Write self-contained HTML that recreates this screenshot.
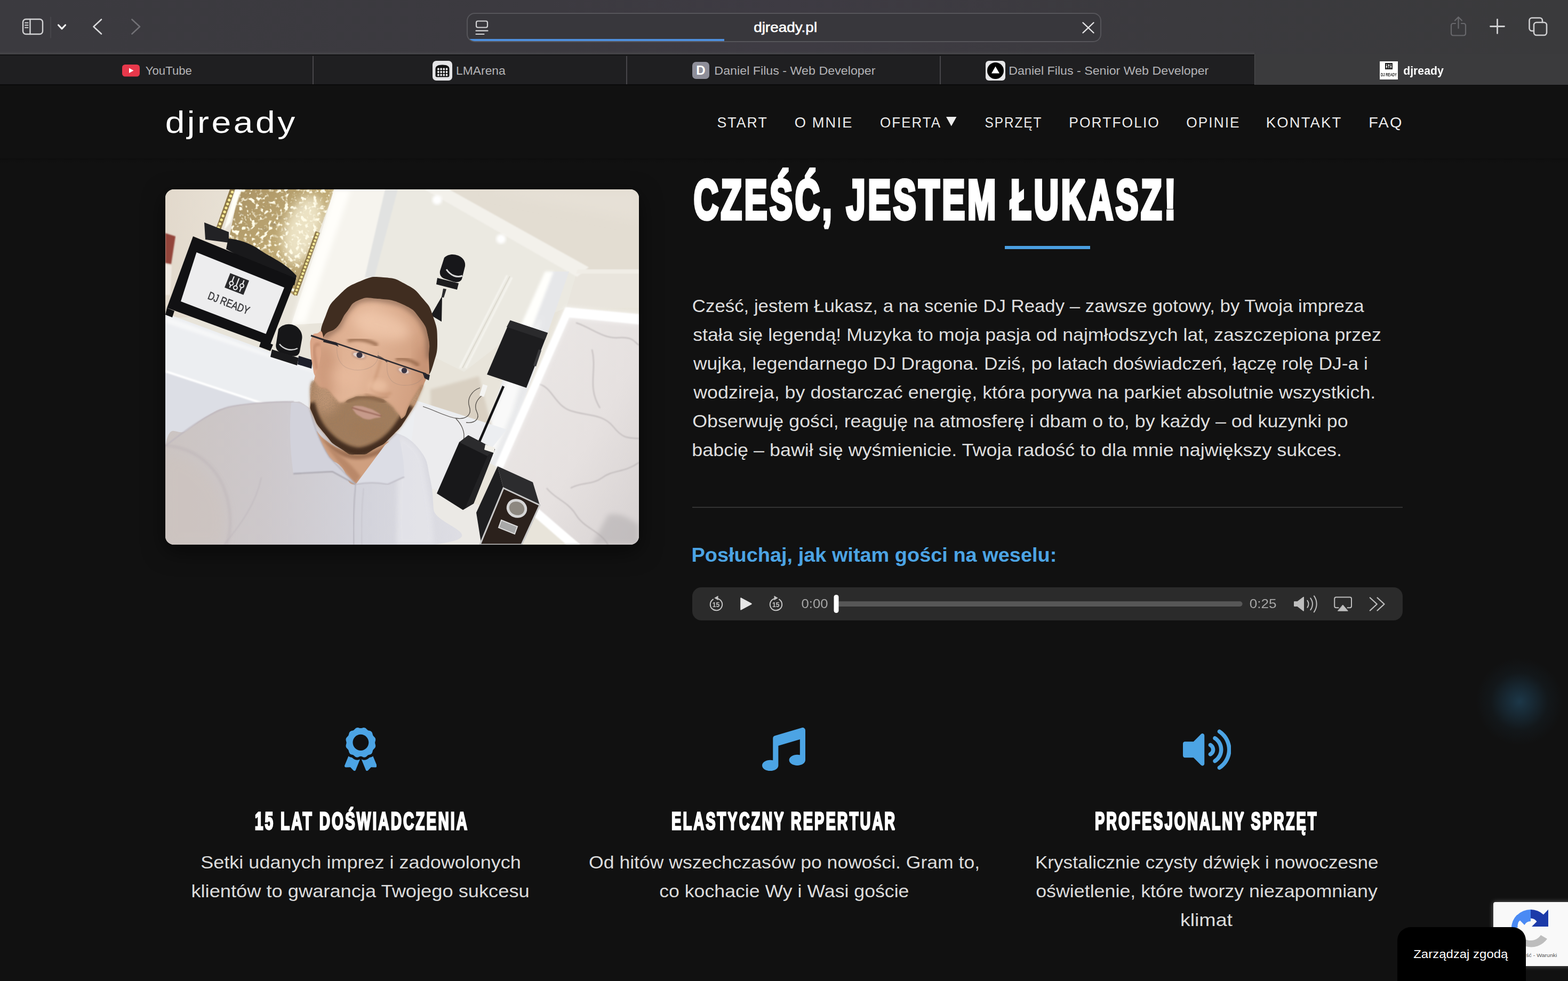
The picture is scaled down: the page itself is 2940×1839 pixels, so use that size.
<!DOCTYPE html>
<html lang="pl">
<head>
<meta charset="utf-8">
<title>djready</title>
<style>
*{box-sizing:border-box;margin:0;padding:0}
html,body{width:2940px;height:1839px;overflow:hidden;background:#111111}
body{position:relative;font-family:"Liberation Sans",sans-serif;color:#fff}
.abs{position:absolute}
.t{position:absolute;white-space:nowrap;line-height:1;transform-origin:0 0}
.tc{position:absolute;white-space:nowrap;line-height:1;transform-origin:50% 50%;text-align:center}
/* browser chrome */
#toolbar{left:0;top:0;width:2940px;height:103px;background:linear-gradient(90deg,#3b3a3f 0%,#3c3a40 35%,#3e3b43 50%,#3b3a3e 75%,#3a3a3c 100%)}
#tabbar{left:0;top:102px;width:2940px;height:58px;background:#1f1f21;border-top:2px solid #131314;border-bottom:2px solid #0a0a0a}
#tabhl{left:0;top:96px;width:2352px;height:6px;background:linear-gradient(rgba(72,72,75,0),rgba(72,72,75,.9))}
.tabdiv{top:105px;width:2px;height:53px;background:#47464a}
#acttab{left:2352px;top:102px;width:588px;height:56.500px;background:#3b3b3d;border-left:1.500px solid #4c4c4e}
.tabtxt{font-size:23.5px;color:#b3b3b6;top:120px}
#urlbar{left:875px;top:24px;width:1190px;height:55px;border:2px solid #56555a;border-radius:15px;background:#38373c;overflow:hidden}
#prog{left:0;bottom:-2px;width:481px;height:6px;background:#4e8fdd}
/* page */
#nav .t{font-size:28.5px;letter-spacing:3.2px;color:#ededed;top:215px}
.p{font-size:31px;color:#dfdfdf}
.fh{font-weight:bold;font-size:47px;color:#fff;letter-spacing:2px}
.ft{font-size:31px;color:#dcdcdc}
</style>
</head>
<body>

<!-- ===== Browser toolbar ===== -->
<div id="toolbar" class="abs"></div>
<div id="tabbar" class="abs"></div>
<div id="tabhl" class="abs"></div>
<div id="acttab" class="abs"></div>
<div class="abs tabdiv" style="left:586px"></div>
<div class="abs tabdiv" style="left:1174px"></div>
<div class="abs tabdiv" style="left:1762px"></div>

<!-- toolbar icons -->
<svg class="abs" style="left:0;top:0" width="2940" height="103" viewBox="0 0 2940 103" fill="none" stroke-linecap="round" stroke-linejoin="round">
  <!-- sidebar -->
  <rect x="43" y="36" width="37" height="28" rx="5.5" stroke="#d2d2d4" stroke-width="2.4"/>
  <line x1="56.5" y1="36" x2="56.5" y2="64" stroke="#d2d2d4" stroke-width="2.4"/>
  <path d="M47 42.7h5.5M47 47.2h5.5M47 51.7h5.5" stroke="#d2d2d4" stroke-width="2"/>
  <line x1="95" y1="32" x2="95" y2="71" stroke="#4b4a4f" stroke-width="1.5"/>
  <path d="M109.5 47l6.5 6.8 6.5-6.8" stroke="#f2f2f2" stroke-width="3.2"/>
  <path d="M190 36.5l-14.5 13.5 14.5 13.5" stroke="#dadadc" stroke-width="2.6"/>
  <path d="M247.5 36.5l14.5 13.5-14.5 13.5" stroke="#727176" stroke-width="2.6"/>
  <!-- share -->
  <path d="M2729 44h-4.5a3.5 3.5 0 0 0-3.500 3.500v15.500a3.500 3.500 0 0 0 3.500 3.500h20a3.500 3.500 0 0 0 3.500-3.500v-15.500a3.500 3.500 0 0 0-3.500-3.500h-4.500" stroke="#68686c" stroke-width="2.2"/>
  <path d="M2734.500 53v-21M2728 38.500l6.500-6.500 6.500 6.500" stroke="#68686c" stroke-width="2.2"/>
  <!-- plus -->
  <path d="M2794.500 49.500h26M2807.500 36.500v26" stroke="#cfcfd1" stroke-width="2.8"/>
  <!-- tabs -->
  <path d="M2876 58h-3.500a5 5 0 0 1-5-5v-14.500a5 5 0 0 1 5-5h14.500a5 5 0 0 1 5 5v3.500" stroke="#cfcfd1" stroke-width="2.6"/>
  <rect x="2876" y="42" width="24" height="24" rx="5" stroke="#cfcfd1" stroke-width="2.6"/>
</svg>

<!-- url bar -->
<div id="urlbar" class="abs"><div id="prog" class="abs"></div></div>
<svg class="abs" style="left:885px;top:30px" width="40" height="44" viewBox="885 30 40 44" fill="none" stroke="#d4d4d6" stroke-linecap="round">
  <rect x="893" y="39.500" width="21" height="12" rx="3" stroke-width="2.2"/>
  <path d="M892.500 57.700h22M892.500 64h15" stroke-width="2.2"/>
</svg>
<svg class="abs" style="left:2024px;top:36px" width="32" height="32" viewBox="2024 36 32 32" fill="none" stroke="#e4e4e6" stroke-width="2.4" stroke-linecap="round"><path d="M2030.500 42.500l20 19M2050.500 42.500l-20 19"/></svg>

<!-- tabs content -->
<svg class="abs" style="left:229px;top:121px" width="33" height="23" viewBox="0 0 33 23"><rect width="33" height="22.500" rx="5.500" fill="#e7384b"/><path d="M13 6.500l8.500 4.800-8.500 4.800z" fill="#fff"/></svg>

<svg class="abs" style="left:811px;top:114px" width="37" height="37" viewBox="0 0 37 37"><rect width="37" height="37" rx="7" fill="#e4e4e6"/><path d="M5.500 15Q5.500 7.500 18.500 7.500T31.500 15V27.500Q31.500 30.500 28.500 30.500H8.500Q5.500 30.500 5.500 27.500z" fill="#111"/><g fill="#ececee"><rect x="9.2" y="13.5" width="3.400" height="4" rx="1.200"/><rect x="14.4" y="13.5" width="3.400" height="4" rx="1.200"/><rect x="19.6" y="13.5" width="3.400" height="4" rx="1.200"/><rect x="24.8" y="13.5" width="3.400" height="4" rx="1.200"/><rect x="9.2" y="19" width="3.400" height="4" rx="1.200"/><rect x="14.4" y="19" width="3.400" height="4" rx="1.200"/><rect x="19.6" y="19" width="3.400" height="4" rx="1.200"/><rect x="24.8" y="19" width="3.400" height="4" rx="1.200"/><rect x="9.2" y="24.5" width="3.400" height="4" rx="1.200"/><rect x="14.4" y="24.5" width="3.400" height="4" rx="1.200"/><rect x="19.6" y="24.5" width="3.400" height="4" rx="1.200"/><rect x="24.8" y="24.5" width="3.400" height="4" rx="1.200"/></g></svg>

<div class="abs" style="left:1298px;top:116px;width:32px;height:32px;border-radius:7px;background:#8e8e99"></div>
<div class="tc" style="left:1298px;top:120px;width:32px;font-size:24px;font-weight:bold;color:#fff">D</div>

<svg class="abs" style="left:1848px;top:114px" width="37" height="37" viewBox="0 0 37 37"><rect width="37" height="37" rx="6" fill="#e6e6e8"/><circle cx="18.500" cy="18.500" r="15.500" fill="#000"/><path d="M18.500 10.500l7.500 13h-15z" fill="#fff"/></svg>

<svg class="abs" style="left:2587px;top:115px;will-change:transform" width="34" height="34" viewBox="0 0 34 34"><rect width="34" height="34" fill="#fff"/><rect x="10" y="3" width="14" height="12" fill="#222"/><path d="M13 5v8M17 5v8M21 5v8" stroke="#fff" stroke-width="1"/><circle cx="13" cy="10" r="1.300" fill="#fff"/><circle cx="17" cy="7.500" r="1.300" fill="#fff"/><circle cx="21" cy="10" r="1.300" fill="#fff"/><text x="17" y="27.500" font-family="Liberation Sans, sans-serif" font-size="8.500" font-weight="bold" fill="#222" text-anchor="middle" textLength="30" lengthAdjust="spacingAndGlyphs">DJ READY</text></svg>

<!-- ===== Page ===== -->
<div class="abs" id="hdrshadow" style="left:0;top:297px;width:2940px;height:8px;background:linear-gradient(#0e0e0e,#111111)"></div>


<div id="nav">
  <svg class="abs" style="left:1773.500px;top:219px" width="20" height="18" viewBox="0 0 20 18"><path d="M0 0h19.500l-9.750 17.500z" fill="#ededed"/></svg>
</div>

<!-- photo placeholder -->
<div class="abs" id="photo" style="left:310px;top:355px;width:888px;height:666px;border-radius:16px;overflow:hidden;background:#e6e1d6;box-shadow:0 12px 40px rgba(0,0,0,.55)">
<!--PHOTO-S-->
<svg class="abs" style="left:0;top:0;will-change:transform" width="888" height="666" viewBox="0 0 888 666">
<defs>
  <filter id="b1" x="-5%" y="-5%" width="110%" height="110%"><feGaussianBlur stdDeviation="1"/></filter>
  <filter id="b2" x="-10%" y="-10%" width="120%" height="120%"><feGaussianBlur stdDeviation="2.500"/></filter>
  <filter id="b4" x="-20%" y="-20%" width="140%" height="140%"><feGaussianBlur stdDeviation="5"/></filter>
  <filter id="b8" x="-30%" y="-30%" width="160%" height="160%"><feGaussianBlur stdDeviation="10"/></filter>
  <filter id="b16" x="-40%" y="-40%" width="180%" height="180%"><feGaussianBlur stdDeviation="18"/></filter>
  <filter id="spark" x="0" y="0" width="100%" height="100%">
    <feTurbulence type="fractalNoise" baseFrequency="0.13" numOctaves="2" seed="7" result="n"/>
    <feColorMatrix in="n" type="matrix" values="0 0 0 0 1  0 0 0 0 0.970  0 0 0 0 0.800  4 4 0 0 -4.150"/>
    <feGaussianBlur stdDeviation="0.600"/>
  </filter>
  <filter id="sparkd" x="0" y="0" width="100%" height="100%">
    <feTurbulence type="fractalNoise" baseFrequency="0.100" numOctaves="2" seed="21" result="n"/>
    <feColorMatrix in="n" type="matrix" values="0 0 0 0 0.400  0 0 0 0 0.310  0 0 0 0 0.160  -3.500 -3.500 0 0 2.900"/>
    <feGaussianBlur stdDeviation="0.800"/>
  </filter>
  <filter id="stub" x="0" y="0" width="100%" height="100%">
    <feTurbulence type="fractalNoise" baseFrequency="0.450" numOctaves="2" seed="3" result="n"/>
    <feColorMatrix in="n" type="matrix" values="0 0 0 0 0.300  0 0 0 0 0.200  0 0 0 0 0.130  2.500 2.500 0 0 -2.200"/>
    <feComposite in2="SourceGraphic" operator="in"/>
  </filter>
  <linearGradient id="gwall" x1="0" y1="0" x2="1" y2="0"><stop offset="0" stop-color="#e2d9cc"/><stop offset="1" stop-color="#e9e2d6"/></linearGradient>
  <linearGradient id="gshirt" x1="0" y1="0" x2="1" y2="0"><stop offset="0" stop-color="#cbc3bf"/><stop offset="0.400" stop-color="#cdc8cb"/><stop offset="0.700" stop-color="#d3d3db"/><stop offset="1" stop-color="#dedee4"/></linearGradient>
  <linearGradient id="gskin" x1="0" y1="0" x2="1" y2="0.300"><stop offset="0" stop-color="#d6a486"/><stop offset="0.500" stop-color="#e4b799"/><stop offset="1" stop-color="#d19f80"/></linearGradient>
  <linearGradient id="ggold" x1="0" y1="0" x2="1" y2="1"><stop offset="0" stop-color="#a89163"/><stop offset="0.500" stop-color="#bfa974"/><stop offset="1" stop-color="#b19a68"/></linearGradient>
  <linearGradient id="gmarble" x1="0" y1="0" x2="1" y2="1"><stop offset="0" stop-color="#ece9e7"/><stop offset="0.600" stop-color="#e6e1e0"/><stop offset="1" stop-color="#d6d1d1"/></linearGradient>
  <clipPath id="cgold"><path d="M138 0H318L243 200 118 100z"/></clipPath>

  <clipPath id="cbeard"><path d="M275.0 360.0C280.7 352.0 279.7 366.7 289.0 372.0C298.3 377.3 293.3 369.3 303.0 376.0C312.7 382.7 309.0 384.0 318.0 392.0C327.0 400.0 320.0 400.0 330.0 400.0C340.0 400.0 335.0 396.3 348.0 392.0C361.0 387.7 352.3 387.7 369.0 387.0C385.7 386.3 381.0 385.0 398.0 390.0C415.0 395.0 407.3 392.0 420.0 402.0C432.7 412.0 427.3 411.3 436.0 420.0C444.7 428.7 438.7 433.3 446.0 428.0C453.3 422.7 450.0 418.7 458.0 404.0C466.0 389.3 462.0 396.7 470.0 384.0C478.0 371.3 479.7 366.0 482.0 366.0C484.3 366.0 485.7 365.0 477.0 384.0C468.3 403.0 473.3 397.0 456.0 423.0C438.7 449.0 446.0 441.0 425.0 462.0C404.0 483.0 414.3 474.3 393.0 486.0C371.7 497.7 382.3 497.0 361.0 497.0C339.7 497.0 350.0 499.3 329.0 486.0C308.0 472.7 315.3 478.0 298.0 457.0C280.7 436.0 285.7 443.3 277.0 423.0C268.3 402.7 272.7 417.0 272.0 396.0C271.3 375.0 269.3 368.0 275.0 360.0z"/></clipPath>
  <clipPath id="cface"><path d="M296.0 278.0C306.7 257.3 307.3 274.0 322.0 258.0C336.7 242.0 326.7 246.7 340.0 230.0C353.3 213.3 342.7 216.3 362.0 208.0C381.3 199.7 370.0 202.3 398.0 205.0C426.0 207.7 419.3 203.3 446.0 216.0C472.7 228.7 462.3 222.3 478.0 243.0C493.7 263.7 487.7 254.0 493.0 278.0C498.3 302.0 493.7 291.3 494.0 315.0C494.3 338.7 496.0 334.7 494.0 349.0C492.0 363.3 493.7 346.3 488.0 358.0C482.3 369.7 487.7 362.3 477.0 384.0C466.3 405.7 473.3 397.0 456.0 423.0C438.7 449.0 446.0 441.0 425.0 462.0C404.0 483.0 414.3 474.3 393.0 486.0C371.7 497.7 382.3 497.0 361.0 497.0C339.7 497.0 350.0 499.3 329.0 486.0C308.0 472.7 315.3 478.0 298.0 457.0C280.7 436.0 285.7 443.3 277.0 423.0C268.3 402.7 271.3 418.0 272.0 396.0C272.7 374.0 273.0 382.3 279.0 357.0C285.0 331.7 284.3 346.3 290.0 320.0C295.7 293.7 285.3 298.7 296.0 278.0z"/></clipPath>
  <clipPath id="cshirt"><path d="M0.0 481.0C9.3 431.1 21.3 465.3 40.0 452.0C58.7 438.7 61.8 434.3 80.0 424.0C98.2 413.7 94.7 413.6 118.0 408.0C141.3 402.4 152.5 402.3 180.0 400.0C207.5 397.7 216.9 397.1 236.0 398.0C255.1 398.9 247.1 394.2 262.0 404.0C276.9 413.8 277.8 417.6 300.0 440.0C322.2 462.4 330.9 493.0 357.0 500.0C383.1 507.0 393.6 479.8 412.0 470.0C430.4 460.2 420.4 453.1 436.0 458.0C451.6 462.9 465.0 471.9 479.0 491.0C493.0 510.1 490.4 514.6 496.0 540.0C501.6 565.4 501.1 570.6 503.0 600.0C504.9 629.4 621.4 650.6 504.0 666.0C386.6 681.4 117.6 709.2 0.0 666.0C-117.6 622.8 -9.3 530.9 0.0 481.0z"/></clipPath>
</defs>
<rect width="888" height="666" fill="#e8e4da"/>
<path d="M0 0H140L100 240H0z" fill="url(#gwall)"/>
<path d="M0 82l19 6-8 52-11-2z" fill="#93453a" filter="url(#b1)"/>
<path d="M0 140l12 3-3 55-9 0z" fill="#efe9e2" filter="url(#b1)"/>
<path d="M497 0H888V154H773z" fill="#e3ddd2"/>
<path d="M600 0H888V60z" fill="#e6e0d6" filter="url(#b8)"/>
<path d="M773 150H888V222H752z" fill="#e9e5dd"/>
<path d="M430 0h67L773 150l-21 72-75 30-117 90-195-97z" fill="#ebe9e1"/>
<path d="M486 0h46L794 146l-22 18z" fill="#f3f1eb" filter="url(#b1)"/>
<path d="M773 150H888v8H770z" fill="#f0ede6" filter="url(#b1)"/>
<circle cx="509.600" cy="19.700" r="9" fill="#ffffff" filter="url(#b2)"/><circle cx="509.600" cy="19.700" r="4.500" fill="#ffffff"/>
<circle cx="629.400" cy="93" r="9" fill="#ffffff" filter="url(#b2)"/><circle cx="629.400" cy="93" r="4.500" fill="#ffffff"/>
<path d="M641 161L552 335M650 165L563 335" stroke="#f6f5f0" stroke-width="3" fill="none" filter="url(#b1)"/>
<path d="M646 163L557 335" stroke="#d9d6cc" stroke-width="1.500" fill="none"/>
<path d="M721 154h36L628 524 585 500 640 335z" fill="#e6e7e9"/>
<path d="M705 240L650 420 612 510 585 495 650 330z" fill="#fbfbfa" opacity="0.950" filter="url(#b4)"/>
<path d="M712 154h16L672 300 642 340h-14z" fill="#fffffc" filter="url(#b2)"/>
<!-- gold panel -->
<path d="M138 0H318L243 200 118 100z" fill="url(#ggold)"/>
<g clip-path="url(#cgold)">
  <rect x="110" y="0" width="215" height="205" filter="url(#sparkd)"/>
  <rect x="110" y="0" width="215" height="205" filter="url(#spark)"/>
  <ellipse cx="258" cy="75" rx="34" ry="66" fill="#fffbe6" opacity="0.700" filter="url(#b8)" transform="rotate(18 258 75)"/>
</g>
<path d="M121 0h10L104 76H94z" fill="#8d7848"/>
<circle cx="125.5" cy="5.0" r="2.6" fill="#f9e994"/><circle cx="122.6" cy="12.4" r="2.6" fill="#f9e994"/><circle cx="119.7" cy="19.9" r="2.6" fill="#f9e994"/><circle cx="116.8" cy="27.3" r="2.6" fill="#f9e994"/><circle cx="113.9" cy="34.8" r="2.6" fill="#f9e994"/><circle cx="111.1" cy="42.2" r="2.6" fill="#f9e994"/><circle cx="108.2" cy="49.7" r="2.6" fill="#f9e994"/><circle cx="105.3" cy="57.1" r="2.6" fill="#f9e994"/><circle cx="102.4" cy="64.6" r="2.6" fill="#f9e994"/><circle cx="99.5" cy="72.0" r="2.6" fill="#f9e994"/>
<path d="M131 0h12L122 62 110 76z" fill="#fffef6" filter="url(#b1)"/>
<path d="M286 80L243 198" stroke="#8d7848" stroke-width="9" fill="none"/>
<circle cx="285.0" cy="84.0" r="2.4" fill="#f9e994"/><circle cx="282.7" cy="90.2" r="2.4" fill="#f9e994"/><circle cx="280.4" cy="96.3" r="2.4" fill="#f9e994"/><circle cx="278.2" cy="102.5" r="2.4" fill="#f9e994"/><circle cx="275.9" cy="108.7" r="2.4" fill="#f9e994"/><circle cx="273.6" cy="114.8" r="2.4" fill="#f9e994"/><circle cx="271.3" cy="121.0" r="2.4" fill="#f9e994"/><circle cx="269.1" cy="127.2" r="2.4" fill="#f9e994"/><circle cx="266.8" cy="133.3" r="2.4" fill="#f9e994"/><circle cx="264.5" cy="139.5" r="2.4" fill="#f9e994"/><circle cx="262.2" cy="145.7" r="2.4" fill="#f9e994"/><circle cx="259.9" cy="151.8" r="2.4" fill="#f9e994"/><circle cx="257.7" cy="158.0" r="2.4" fill="#f9e994"/><circle cx="255.4" cy="164.2" r="2.4" fill="#f9e994"/><circle cx="253.1" cy="170.3" r="2.4" fill="#f9e994"/><circle cx="250.8" cy="176.5" r="2.4" fill="#f9e994"/><circle cx="248.6" cy="182.7" r="2.4" fill="#f9e994"/><circle cx="246.3" cy="188.8" r="2.4" fill="#f9e994"/><circle cx="244.0" cy="195.0" r="2.4" fill="#f9e994"/>
<!-- bright pillar -->
<path d="M316 0H432L366 246 236 254 292 84z" fill="#f6f4ee"/>
<path d="M318 0h30L262 250h-24L292 84z" fill="#fffefa" filter="url(#b4)"/>
<path d="M412 0h24L392 165h-18z" fill="#e1e2e1" filter="url(#b1)"/>
<path d="M497 375l91-25 30 120-120 10z" fill="#d9d0c2" filter="url(#b2)"/>
<!-- stage -->
<path d="M0 232L271 332 640 450 520 600 300 470 209 410 0 341z" fill="#eceef1"/>
<path d="M0 341L209 410 330 480 0 480z" fill="#dcdee5"/>
<path d="M0 341L209 410" stroke="#ffffff" stroke-width="4" fill="none" filter="url(#b1)"/>
<path d="M0 237L271 337 330 360 0 250z" fill="#f6f7f8" filter="url(#b2)"/>
<path d="M470 400L600 445 560 666H440z" fill="#ececee"/>
<path d="M497 560L640 610 640 666H480z" fill="#ebe9e5"/>
<!-- marble -->
<path d="M752 222L888 235V666H778L698 600 620 520z" fill="url(#gmarble)"/>
<g fill="none" stroke="#a39c9e" stroke-width="2" opacity="0.550" filter="url(#b1)">
  <path d="M770 250c30 10 50 30 80 28s30 10 38 14"/>
  <path d="M700 365c25 5 30 40 60 50s60 5 80 30 30 20 48 22"/>
  <path d="M760 560c20-12 40-5 60-20s40-8 68-28"/>
  <path d="M715 560c15 20 40 25 55 50s45 30 60 56"/>
  <path d="M800 300c10 40-10 70 15 110"/>
</g>
<path d="M830 610c20-5 40 5 58 20V666H800z" fill="#a8a4a6" opacity="0.450" filter="url(#b4)"/>
<path d="M752 221L888 234v19L756 240z" fill="#ffffff" filter="url(#b1)"/>
<path d="M750 221l14 4L632 524l-13-6z" fill="#ffffff" filter="url(#b1)"/>
<path d="M698 597L778 666H752L690 612z" fill="#ffffff" filter="url(#b1)"/>
<path d="M752 221L888 234v19L756 240zM750 221l14 4L632 524l-13-6z" fill="#ffffff" opacity="0.600" filter="url(#b4)"/>
<g fill="none" stroke="#3a3632" stroke-width="1.300" opacity="0.850">
  <path d="M590 372c-15 5-25 20-20 35s-5 25-25 22-40-15-62-22"/>
  <path d="M596 385c-12 8-18 20-12 32s-2 22-20 20"/>
  <path d="M545 430c10 10 18 25 14 40"/>
</g>
<rect x="592" y="366" width="9" height="22" fill="#f4f4f2" transform="rotate(18 596 377)"/>
<!-- moving head on stand -->
<path d="M518 248L498 236 519 200z" fill="#1b1b1d"/>
<path d="M521 186l6 1-5 16-4-1z" fill="#2a2a2c"/>
<path d="M510 166l40 10-3 12-39-10z" fill="#1c1c1e"/>
<path d="M523 128c6-6 16-8 26-4s14 12 13 20l-6 24c-3 6-9 7-16 5l-18-6c-6-3-8-8-7-14z" fill="#17171a"/>
<path d="M527 150c8 12 20 16 30 12" stroke="#d8d8d8" stroke-width="3" fill="none"/>
<!-- speaker top -->
<path d="M646.500 245.500L717 269 677 372 603 347z" fill="#1d1d1f"/>
<path d="M646.500 245.500L717 269 712 282 640 258z" fill="#2a2a2c"/>
<path d="M700 300l5 2-10 30-5-2z" fill="#3a3a3c"/>
<path d="M634 369L584 484" stroke="#141416" stroke-width="4.500"/>
<!-- sub -->
<path d="M551 474L568 461 618 487 578 589 558 601 509 570z" fill="#18181a"/>
<path d="M551 474L568 461 618 487 604 500z" fill="#2b2b2d"/>
<path d="M604 500L618 487 578 589 562 598z" fill="#222224"/>
<path d="M600 478l18 6-2 10-18-6z" fill="#f2f0ea"/>
<!-- flight case -->
<path d="M623 519L689 549 702 592 634 560z" fill="#2c2c2e"/>
<path d="M623 519L634 560 592 662 583 606z" fill="#1e1e20"/>
<path d="M634 560L702 592 668 666H590z" fill="#2b211c"/>
<path d="M634 560L702 592 668 666H590z" fill="none" stroke="#c9c9c9" stroke-width="3"/>
<ellipse cx="659" cy="598" rx="17" ry="15" fill="#8d8880" stroke="#d6d6d6" stroke-width="5" transform="rotate(22 659 598)"/>
<path d="M630 620l30 12-5 14-30-12z" fill="#a8a8a8" stroke="#dcdcdc" stroke-width="2"/>
<!-- booth -->
<path d="M73 62l46 18 0 20-44-6z" fill="#222225"/>
<path d="M118 92c20 2 40 8 60 22s45 22 68 48l-4 18L114 112z" fill="#19191b"/>
<path d="M52 88L245 167 196 293 3 222z" fill="#111113"/>
<path d="M3 222l14 6-4 12-13-5z" fill="#111113"/>
<path d="M180 283l22 8-5 12-21-8z" fill="#111113"/>
<path d="M58.500 118L223 184 188.500 271 29 210z" fill="#ededee"/>
<g transform="translate(124 203) rotate(21.500)">
  <rect x="-19" y="-42" width="38" height="29" fill="#2a2a2c"/>
  <g stroke="#ededee" stroke-width="2.200" fill="none"><path d="M-10-39v23M0-39v23M10-39v23"/></g>
  <circle cx="-10" cy="-25" r="3.600" fill="#2a2a2c" stroke="#ededee" stroke-width="2"/>
  <circle cx="0" cy="-20" r="3.600" fill="#2a2a2c" stroke="#ededee" stroke-width="2"/>
  <circle cx="10" cy="-28" r="3.600" fill="#2a2a2c" stroke="#ededee" stroke-width="2"/>
  <text x="-1" y="18.500" font-family="Liberation Sans, sans-serif" font-size="21" fill="#38383b" stroke="#38383b" stroke-width="0.500" text-anchor="middle" textLength="82" lengthAdjust="spacingAndGlyphs">DJ READY</text>
</g>
<path d="M212 262c8-10 22-12 32-6s14 16 12 26l-4 22c-2 8-8 10-16 8l-20-6c-8-4-10-10-8-18z" fill="#161618"/>
<path d="M200 300l50 16-3 14-50-16z" fill="#1a1a1c"/>
<path d="M214 290c8 10 22 14 34 8" stroke="#cfcfcf" stroke-width="2.500" fill="none"/>
<path d="M250 312l26 8-2 16-26-8z" fill="#1d1f2a"/>

<path d="M0.0 481.0C9.3 431.1 21.3 465.3 40.0 452.0C58.7 438.7 61.8 434.3 80.0 424.0C98.2 413.7 94.7 413.6 118.0 408.0C141.3 402.4 152.5 402.3 180.0 400.0C207.5 397.7 216.9 397.1 236.0 398.0C255.1 398.9 247.1 394.2 262.0 404.0C276.9 413.8 277.8 417.6 300.0 440.0C322.2 462.4 330.9 493.0 357.0 500.0C383.1 507.0 393.6 479.8 412.0 470.0C430.4 460.2 420.4 453.1 436.0 458.0C451.6 462.9 465.0 471.9 479.0 491.0C493.0 510.1 490.4 514.6 496.0 540.0C501.6 565.4 501.1 570.6 503.0 600.0C504.9 629.4 621.4 650.6 504.0 666.0C386.6 681.4 117.6 709.2 0.0 666.0C-117.6 622.8 -9.3 530.9 0.0 481.0z" fill="url(#gshirt)"/>
<path d="M0 481C40 450 80 420 118 408c40-8 80-10 123-10" stroke="#bdb6bd" stroke-width="2" fill="none" filter="url(#b1)"/>
<path d="M0 480c60 5 110 45 120 120 4 30 0 50-5 66" stroke="#b7aeb3" stroke-width="3" fill="none" opacity="0.700" filter="url(#b2)"/>
<path d="M180 540c-10 50-40 90-70 126" stroke="#bcb5bb" stroke-width="2" fill="none" opacity="0.600" filter="url(#b1)"/>
<path d="M0 500c50 0 100 40 112 110l-4 56H0z" fill="#cdc3be" opacity="0.550" filter="url(#b8)"/>
<g clip-path="url(#cshirt)"><path d="M436 458c20 10 40 24 48 50l16 100 4 58h-70z" fill="#e4e4e9" opacity="0.900" filter="url(#b4)"/></g>
<path d="M284.0 455.0C282.4 447.0 287.7 461.2 300.0 470.0C312.3 478.8 313.7 480.8 330.0 488.0C346.3 495.2 344.2 497.5 361.0 497.0C377.8 496.5 379.4 492.1 393.0 486.0C406.6 479.9 404.8 475.6 412.0 474.0C419.2 472.4 423.2 470.4 420.0 480.0C416.8 489.6 416.8 490.5 400.0 510.0C383.2 529.5 375.7 550.3 357.0 553.0C338.3 555.7 343.6 534.1 330.0 520.0C316.4 505.9 318.3 517.3 306.0 500.0C293.7 482.7 285.6 463.0 284.0 455.0z" fill="#cf9f7f"/>
<path d="M290 462c20 20 50 34 72 34 24 0 44-12 58-22l-10 18c-14 8-32 14-50 14-26 0-52-16-70-44z" fill="#8f6247" opacity="0.750" filter="url(#b2)"/>
<path d="M300 480l56 72 10-14c-20-26-42-44-66-58z" fill="#b07f60" opacity="0.700" filter="url(#b2)"/>
<path d="M236 400c12-2 26 4 36 14 6 30 18 60 35 88l50 51-44-24-73 4c-6-44-8-88-4-133z" fill="#d2d2db"/>
<path d="M272 414c6 30 18 60 35 88l50 51" stroke="#b6b3bc" stroke-width="2" fill="none" filter="url(#b1)"/>
<path d="M240 533l73-4 44 24" stroke="#a9a6ae" stroke-width="2.400" fill="none" filter="url(#b1)"/>
<path d="M357 553l55-74 24-20c8 26 12 54 12 80l-31 14c-20-4-40-4-60 0z" fill="#dcdde5"/>
<path d="M357 553c20-4 40-4 60 0l31-14" stroke="#bbb9c2" stroke-width="2" fill="none" filter="url(#b1)"/>
<path d="M357 553c-4 36-5 74-4 113" stroke="#b2b0b9" stroke-width="2" fill="none" filter="url(#b1)"/>
<path d="M372 560c-4 34-5 70-4 106" stroke="#c4c2ca" stroke-width="1.500" fill="none" filter="url(#b1)"/>
<path d="M294.0 280.0C288.9 262.9 292.7 257.6 301.0 236.0C309.3 214.4 307.7 216.1 325.0 199.0C342.3 181.9 343.6 181.1 366.0 172.0C388.4 162.9 386.3 163.4 409.0 165.0C431.7 166.6 431.3 167.3 451.0 178.0C470.7 188.7 469.4 189.0 483.0 205.0C496.6 221.0 494.8 217.2 502.0 238.0C509.2 258.8 509.7 259.5 510.0 283.0C510.3 306.5 508.3 308.4 503.0 326.0C497.7 343.6 496.1 347.9 490.0 349.0C483.9 350.1 504.0 343.1 480.0 330.0C456.0 316.9 442.7 308.0 400.0 300.0C357.3 292.0 348.3 305.3 320.0 300.0C291.7 294.7 299.1 297.1 294.0 280.0z" fill="#402d20"/>
<path d="M296.0 276.0C292.5 257.3 289.9 269.5 284.0 270.0C278.1 270.5 277.2 270.0 274.0 278.0C270.8 286.0 271.5 286.1 272.0 300.0C272.5 313.9 273.6 316.7 276.0 330.0C278.4 343.3 277.3 343.1 281.0 350.0C284.7 356.9 285.7 358.7 290.0 356.0C294.3 353.3 295.4 361.3 297.0 340.0C298.6 318.7 299.5 294.7 296.0 276.0z" fill="#dba587"/>
<path d="M290 292c-8-6-12 2-11 14l5 32" stroke="#b37d61" stroke-width="3" fill="none" filter="url(#b2)"/>
<path d="M296.0 278.0C304.5 261.5 310.3 270.8 322.0 258.0C333.7 245.2 329.3 243.3 340.0 230.0C350.7 216.7 346.5 214.7 362.0 208.0C377.5 201.3 375.6 202.9 398.0 205.0C420.4 207.1 424.7 205.9 446.0 216.0C467.3 226.1 465.5 226.5 478.0 243.0C490.5 259.5 488.7 258.8 493.0 278.0C497.3 297.2 493.7 296.1 494.0 315.0C494.3 333.9 495.6 337.5 494.0 349.0C492.4 360.5 492.5 348.7 488.0 358.0C483.5 367.3 485.5 366.7 477.0 384.0C468.5 401.3 469.9 402.2 456.0 423.0C442.1 443.8 441.8 445.2 425.0 462.0C408.2 478.8 410.1 476.7 393.0 486.0C375.9 495.3 378.1 497.0 361.0 497.0C343.9 497.0 345.8 496.7 329.0 486.0C312.2 475.3 311.9 473.8 298.0 457.0C284.1 440.2 283.9 439.3 277.0 423.0C270.1 406.7 271.5 413.6 272.0 396.0C272.5 378.4 274.2 377.3 279.0 357.0C283.8 336.7 285.5 341.1 290.0 320.0C294.5 298.9 287.5 294.5 296.0 278.0z" fill="url(#gskin)"/>
<g clip-path="url(#cface)">
<ellipse cx="405" cy="255" rx="56" ry="24" fill="#f1c9ad" opacity="0.750" filter="url(#b8)" transform="rotate(16 405 255)"/>
<ellipse cx="300" cy="340" rx="20" ry="52" fill="#c08a6c" opacity="0.500" filter="url(#b8)"/>
<ellipse cx="484" cy="330" rx="14" ry="44" fill="#b98466" opacity="0.500" filter="url(#b8)"/>
<ellipse cx="340" cy="350" rx="30" ry="20" fill="#e9bb9e" opacity="0.600" filter="url(#b8)"/>
<path d="M296 278c10-8 20-14 28-20 6-12 10-22 16-30 8-10 14-16 22-20 12-4 24-4 36-3 18 2 34 6 48 11 14 8 24 16 32 27 8 12 12 22 15 35l2 40" stroke="#5b4030" stroke-width="9" fill="none" opacity="0.550" filter="url(#b4)"/>
</g>
<path d="M275.0 360.0C279.5 353.6 281.5 367.7 289.0 372.0C296.5 376.3 295.3 370.7 303.0 376.0C310.7 381.3 310.8 385.6 318.0 392.0C325.2 398.4 322.0 400.0 330.0 400.0C338.0 400.0 337.6 395.5 348.0 392.0C358.4 388.5 355.7 387.5 369.0 387.0C382.3 386.5 384.4 386.0 398.0 390.0C411.6 394.0 409.9 394.0 420.0 402.0C430.1 410.0 429.1 413.1 436.0 420.0C442.9 426.9 440.1 432.3 446.0 428.0C451.9 423.7 451.6 415.7 458.0 404.0C464.4 392.3 463.6 394.1 470.0 384.0C476.4 373.9 480.1 366.0 482.0 366.0C483.9 366.0 483.9 368.8 477.0 384.0C470.1 399.2 469.9 402.2 456.0 423.0C442.1 443.8 441.8 445.2 425.0 462.0C408.2 478.8 410.1 476.7 393.0 486.0C375.9 495.3 378.1 497.0 361.0 497.0C343.9 497.0 345.8 496.7 329.0 486.0C312.2 475.3 311.9 473.8 298.0 457.0C284.1 440.2 283.9 439.3 277.0 423.0C270.1 406.7 272.5 412.8 272.0 396.0C271.5 379.2 270.5 366.4 275.0 360.0z" fill="#a27d5c" filter="url(#b2)"/>
<g clip-path="url(#cbeard)">
<path d="M276.0 410.0C278.4 411.6 278.6 420.8 285.0 432.0C291.4 443.2 288.3 439.7 300.0 452.0C311.7 464.3 312.7 468.1 329.0 478.0C345.3 487.9 343.9 489.0 361.0 489.0C378.1 489.0 375.9 487.1 393.0 478.0C410.1 468.9 409.8 469.4 425.0 455.0C440.2 440.6 441.7 430.7 450.0 424.0C458.3 417.3 462.7 418.3 456.0 430.0C449.3 441.7 441.8 452.0 425.0 468.0C408.2 484.0 410.1 481.5 393.0 490.0C375.9 498.5 378.1 500.3 361.0 500.0C343.9 499.7 346.3 499.7 329.0 489.0C311.7 478.3 310.1 476.8 296.0 460.0C281.9 443.2 281.3 439.3 276.0 426.0C270.7 412.7 273.6 408.4 276.0 410.0z" fill="#4d3525" opacity="0.900" filter="url(#b4)"/>
<ellipse cx="300" cy="385" rx="26" ry="36" fill="#c79d7d" opacity="0.750" filter="url(#b8)"/>
<ellipse cx="466" cy="390" rx="13" ry="26" fill="#c79d7d" opacity="0.700" filter="url(#b4)"/>
<ellipse cx="380" cy="452" rx="30" ry="13" fill="#a37b58" opacity="0.800" filter="url(#b4)" transform="rotate(14 380 452)"/>
<rect x="265" y="355" width="225" height="150" fill="#000" filter="url(#stub)" opacity="0.350"/>
<path d="M273 400c4 20 12 40 27 57 16 18 36 31 61 35 24-2 44-12 64-33 14-16 25-33 33-54" stroke="#3f2a1c" stroke-width="15" fill="none" opacity="0.900" filter="url(#b2)"/>
<path d="M338 398c10-6 22-9 32-9 14 0 30 3 42 10" stroke="#7d5a40" stroke-width="7" fill="none" opacity="0.700" filter="url(#b2)"/>
</g>
<path d="M352.0 408.0C354.4 405.1 356.5 405.5 364.0 406.0C371.5 406.5 372.0 407.3 380.0 410.0C388.0 412.7 387.6 412.0 394.0 416.0C400.4 420.0 404.5 421.5 404.0 425.0C403.5 428.5 398.9 427.4 392.0 429.0C385.1 430.6 385.5 432.1 378.0 431.0C370.5 429.9 370.1 428.7 364.0 425.0C357.9 421.3 358.2 421.5 355.0 417.0C351.8 412.5 349.6 410.9 352.0 408.0z" fill="#c69a8a" filter="url(#b1)"/>
<path d="M350 409c16 6 36 10 55 16" stroke="#8e5a4c" stroke-width="2" fill="none" filter="url(#b1)"/>
<path d="M404 318c-4 22-12 40-18 56 8 8 22 12 38 8" stroke="#b7805d" stroke-width="3" fill="none" opacity="0.600" filter="url(#b2)"/>
<ellipse cx="398" cy="368" rx="18" ry="11" fill="#ecc1a3" opacity="0.750" filter="url(#b4)"/>
<path d="M374 383c10 6 28 10 44 6" stroke="#9c6a4c" stroke-width="3" fill="none" opacity="0.600" filter="url(#b2)"/>
<path d="M342 284c16-6 38-2 56 8" stroke="#8a5d40" stroke-width="6.500" fill="none" opacity="0.750" filter="url(#b2)"/>
<path d="M432 318c14-2 30 2 43 12" stroke="#8a5d40" stroke-width="6" fill="none" opacity="0.750" filter="url(#b2)"/>
<ellipse cx="363" cy="311" rx="15" ry="8" fill="#c9a08c" opacity="0.800" filter="url(#b1)" transform="rotate(14 363 311)"/>
<ellipse cx="363" cy="311" rx="11" ry="4.600" fill="#e2d2cc" transform="rotate(14 363 311)"/>
<circle cx="364" cy="310.500" r="5.600" fill="#3a3542"/>
<ellipse cx="447" cy="340" rx="14" ry="7.500" fill="#c9a08c" opacity="0.800" filter="url(#b1)" transform="rotate(18 447 340)"/>
<ellipse cx="447" cy="340" rx="10" ry="4.400" fill="#e2d2cc" transform="rotate(18 447 340)"/>
<circle cx="448" cy="339.500" r="5.200" fill="#3a3542"/>
<path d="M297 282l25 7 167 57" stroke="#2e2c32" stroke-width="2.600" fill="none"/>
<path d="M297 281l24 6 4 8-6-3-23-6z" fill="#26242a"/>
<path d="M482 343l14 5-2 10-8-4z" fill="#26242a"/>
<path d="M322 292c-2 20 4 38 22 44s40 2 50-10c6-8 6-16 5-22M416 326c-2 16 2 32 16 38s36 4 46-6c6-6 8-12 10-12" stroke="#8a7a78" stroke-width="1.200" fill="none" opacity="0.250"/>
<path d="M398 312c6 2 12 6 18 12" stroke="#3a383c" stroke-width="2" fill="none" opacity="0.700"/>
<path d="M297 282l-24-8" stroke="#2b2a2e" stroke-width="3"/>
</svg>
<!--PHOTO-E-->
</div>

<!-- heading -->
<div class="abs" style="left:1884px;top:461px;width:160px;height:6px;background:#4a9fe0"></div>

<!-- paragraph -->

<div class="abs" style="left:1298px;top:950px;width:1332px;height:2px;background:#333333"></div>


<!-- audio player -->
<div class="abs" id="player" style="left:1298px;top:1101px;width:1332px;height:62px;border-radius:17px;background:#2b2b2b"></div>
<svg class="abs" style="left:1298px;top:1101px;will-change:transform" width="1332" height="62" viewBox="1298 1101 1332 62" fill="none" stroke-linecap="round" stroke-linejoin="round">
  <!-- back 15 -->
  <g stroke="#c6c6c6" stroke-width="2">
    <path d="M1346.46 1122.45A11.2 11.2 0 1 1 1337.06 1123.60"/>
    <path d="M1451.54 1122.45A11.2 11.2 0 1 0 1460.94 1123.60"/>
  </g>
  <path d="M1339.200 1121l7.300-4.300v8.600z" fill="#c6c6c6"/>
  <path d="M1458.800 1121l-7.300-4.300v8.600z" fill="#c6c6c6"/>
  <text x="1342.600" y="1137.800" font-family="Liberation Sans, sans-serif" font-size="13" font-weight="bold" fill="#c6c6c6" text-anchor="middle" textLength="13.500" lengthAdjust="spacingAndGlyphs">15</text>
  <text x="1454.800" y="1137.800" font-family="Liberation Sans, sans-serif" font-size="13" font-weight="bold" fill="#c6c6c6" text-anchor="middle" textLength="13.500" lengthAdjust="spacingAndGlyphs">15</text>
  <!-- play -->
  <path d="M1389.200 1121.300v21.400l19.500-10.700z" fill="#e6e6e6" stroke="#e6e6e6" stroke-width="2" stroke-linejoin="round"/>
  <!-- track -->
  <path d="M1570 1127.300h754.800a4.800 4.800 0 0 1 0 9.600h-754.800z" fill="#575757"/>
  <rect x="1563.500" y="1115" width="9" height="34" rx="4.200" fill="#ffffff"/>
  <!-- volume -->
  <path d="M2427 1127.300h5.500l11-8.300a.9.900 0 0 1 1.500.7v25a.9.900 0 0 1-1.500.7l-11-8.300h-5.500a1 1 0 0 1-1-1v-7.800a1 1 0 0 1 1-1z" fill="#bebebe"/>
  <g stroke="#bebebe" stroke-width="2">
    <path d="M2451.300 1125.800a10.500 10.500 0 0 1 0 13"/>
    <path d="M2457.200 1121.300a18 18 0 0 1 0 22"/>
    <path d="M2463.800 1117.200a26 26 0 0 1 0 30.200"/>
  </g>
  <!-- airplay -->
  <path d="M2509.500 1139.200h-4.300a3 3 0 0 1-3-3v-13.800a3 3 0 0 1 3-3h25.800a3 3 0 0 1 3 3v13.800a3 3 0 0 1-3 3h-4.500" stroke="#bebebe" stroke-width="2"/>
  <path d="M2518 1134.300l9.300 10.900h-18.600z" fill="#bebebe" stroke="#bebebe" stroke-width="1"/>
  <!-- >> -->
  <path d="M2568.800 1120.500l13 12-13 12M2582.500 1120.500l13 12-13 12" stroke="#bebebe" stroke-width="2.300"/>
</svg>

<!-- features -->
<svg class="abs" style="left:645.600px;top:1364.400px" width="60.750" height="81" viewBox="0 0 384 512"><path fill="#4ca4e4" d="M97.12 362.63c-8.69-8.69-4.16-6.24-25.12-11.85-9.51-2.550-17.870-7.450-25.430-13.320L1.200 448.700c-4.390 10.770 3.810 22.470 15.430 22.030l52.690-2.010L105.560 507c8 8.440 22.040 5.810 26.430-4.960l52.050-127.620c-10.840 6.040-22.870 9.580-35.310 9.580-19.500 0-37.820-7.590-51.610-21.370zM382.800 448.700l-45.370-111.240c-7.560 5.880-15.920 10.770-25.430 13.320-21.070 5.640-16.450 3.180-25.120 11.850-13.790 13.780-32.120 21.370-51.620 21.370-12.440 0-24.470-3.550-35.310-9.580L252 502.040c4.390 10.770 18.440 13.400 26.430 4.960l36.250-38.280 52.690 2.010c11.620.44 19.820-11.270 15.430-22.030zM263 340c15.280-15.550 17.030-14.210 38.790-20.140 13.890-3.790 24.750-14.840 28.470-28.980 7.480-28.400 5.540-24.970 25.950-45.750 10.170-10.350 14.140-25.440 10.420-39.580-7.470-28.380-7.480-24.420 0-52.830 3.720-14.140-.25-29.230-10.420-39.580-20.410-20.780-18.470-17.360-25.950-45.750-3.720-14.140-14.580-25.190-28.470-28.980-27.880-7.610-24.520-5.620-44.950-26.410-10.170-10.350-25-14.400-38.890-10.610-27.870 7.600-23.980 7.610-51.900 0-13.890-3.790-28.720.25-38.890 10.610-20.410 20.780-17.050 18.800-44.940 26.410-13.890 3.790-24.750 14.840-28.470 28.980-7.470 28.390-5.540 24.970-25.950 45.750-10.170 10.350-14.150 25.440-10.420 39.580 7.470 28.360 7.480 24.400 0 52.820-3.720 14.140.25 29.230 10.420 39.590 20.410 20.780 18.470 17.350 25.950 45.750 3.720 14.140 14.580 25.190 28.470 28.980C104.600 325.960 106.270 325 121 340c13.230 13.470 33.840 15.880 49.740 5.820a39.676 39.676 0 0 1 42.530 0c15.890 10.060 36.500 7.650 49.730-5.820zM97.660 175.960c0-53.030 42.240-96.020 94.340-96.020s94.340 42.990 94.340 96.020-42.240 96.020-94.340 96.020-94.340-42.990-94.340-96.020z"/></svg>
<svg class="abs" style="left:1429px;top:1364.300px" width="81" height="81" viewBox="0 0 512 512"><path fill="#4ca4e4" d="M470.380 1.510L150.410 96A32 32 0 0 0 128 126.510v261.410A139 139 0 0 0 96 384c-53 0-96 28.660-96 64s43 64 96 64 96-28.660 96-64V214.320l256-75v184.610a138.400 138.400 0 0 0-32-3.930c-53 0-96 28.660-96 64s43 64 96 64 96-28.650 96-64V32a32 32 0 0 0-41.620-30.490z"/></svg>
<svg class="abs" style="left:2217.500px;top:1364.900px" width="90.600" height="80.500" viewBox="0 0 576 512"><path fill="#4ca4e4" d="M215.030 71.050L126.060 160H24c-13.260 0-24 10.740-24 24v144c0 13.250 10.740 24 24 24h102.060l88.970 88.950c15.030 15.030 40.970 4.470 40.970-16.970V88.020c0-21.460-25.960-31.980-40.970-16.970zm233.320-51.080c-11.170-7.330-26.180-4.240-33.510 6.950-7.340 11.170-4.220 26.180 6.950 33.510 66.270 43.490 105.820 116.600 105.820 195.580 0 78.980-39.550 152.090-105.820 195.580-11.170 7.320-14.290 22.340-6.950 33.500 7.040 10.710 21.930 14.560 33.510 6.950C528.270 439.580 576 351.330 576 256S528.270 72.430 448.350 19.970zM480 256c0-63.530-32.060-121.940-85.770-156.240-11.190-7.140-26.030-3.820-33.120 7.460s-3.780 26.210 7.410 33.360C408.270 165.970 432 209.110 432 256s-23.730 90.030-63.480 115.420c-11.190 7.140-14.500 22.070-7.410 33.360 6.510 10.360 21.120 15.140 33.120 7.460C447.940 377.940 480 319.540 480 256zm-141.770-76.870c-11.580-6.330-26.190-2.160-32.610 9.450-6.390 11.610-2.160 26.200 9.450 32.610C327.980 228.280 336 241.630 336 256c0 14.380-8.020 27.720-20.920 34.810-11.610 6.410-15.840 21-9.450 32.610 6.430 11.660 21.050 15.800 32.610 9.450 28.230-15.550 45.770-45 45.770-76.880s-17.540-61.320-45.780-76.860z"/></svg>

<!-- floating widgets -->
<div class="abs" style="left:2749px;top:1215px;width:200px;height:200px;background:radial-gradient(circle at 50% 50%,rgba(30,62,82,.85) 0%,rgba(28,56,74,.6) 18%,rgba(24,42,54,.25) 38%,rgba(17,17,17,0) 58%)"></div>
<div class="abs" id="recap" style="left:2800px;top:1691px;width:150px;height:120px;background:#f9f9f9;border-radius:4px;box-shadow:0 0 10px rgba(255,255,255,.35);z-index:5"></div>
<svg class="abs" style="left:2832px;top:1702.500px;z-index:6" width="76" height="74" viewBox="0 0 76 74">
  <path d="M38 2v22a13 13 0 0 0-11.500 7l-8.500-8.500L2 38l0 0a36 36 0 0 1 36-36z" fill="#4a8af4"/>
  <path d="M2 36a36 36 0 0 1 10.500-24l7 7 0-1a25 25 0 0 0-6 18z" fill="#4a8af4"/>
  <path d="M38 2a36 36 0 0 1 24 9.500l9-9.500v32h-31l9.500-9.500a14 14 0 0 0-11.500-6z" fill="#1c3aa9"/>
  <path d="M15 38a23 23 0 0 0 42 12l12 7a37 37 0 0 1-67-19z" fill="#bdbdbd"/>
  <path d="M2 36v30l9.500-9.500z" fill="#bdbdbd"/>
</svg>
<div class="abs" id="consentbox" style="left:2620px;top:1738px;width:240.500px;height:120px;background:#000;border-radius:25px 25px 0 0;z-index:20"></div>

<div class="t" id="tab1" style="padding:0 12px;left:260.62px;top:121.67px;font-size:22.6px;color:#b3b3b6;transform:scaleX(0.9816)">YouTube</div>
<div class="t" id="tab2" style="padding:0 12px;left:842.87px;top:121.67px;font-size:22.6px;color:#b3b3b6;transform:scaleX(1.0098)">LMArena</div>
<div class="t" id="tab3" style="padding:0 12px;left:1327.01px;top:121.67px;font-size:22.6px;color:#b3b3b6;transform:scaleX(1.0297)">Daniel Filus - Web Developer</div>
<div class="t" id="tab4" style="padding:0 12px;left:1879.25px;top:121.67px;font-size:22.6px;color:#b3b3b6;transform:scaleX(1.0272)">Daniel Filus - Senior Web Developer</div>
<div class="t" id="tab5" style="padding:0 12px;left:2619.61px;top:121.30px;font-size:22.8px;color:#ffffff;transform:scaleX(0.9323);font-weight:bold">djready</div>
<div class="t" id="urltxt" style="padding:0 12px;left:1399.70px;top:39.11px;font-size:25.5px;color:#ffffff;transform:scaleX(1.0947);-webkit-text-stroke:0.6px #ffffff">djready.pl</div>
<div class="t" id="logo" style="padding:0 12px;left:296.39px;top:199.80px;font-size:58px;color:#ffffff;transform:scaleX(1.1365);letter-spacing:4px">djready</div>
<div class="t" id="n1" style="padding:0 12px;left:1333.43px;top:216.10px;font-size:28px;color:#ececec;transform:scaleX(0.9516);letter-spacing:2.2px">START</div>
<div class="t" id="n2" style="padding:0 12px;left:1478.34px;top:216.10px;font-size:28px;color:#ececec;transform:scaleX(0.9735);letter-spacing:2.2px">O MNIE</div>
<div class="t" id="n3" style="padding:0 12px;left:1638.68px;top:216.10px;font-size:28px;color:#ececec;transform:scaleX(0.9250);letter-spacing:2.2px">OFERTA</div>
<div class="t" id="n4" style="padding:0 12px;left:1835.66px;top:216.10px;font-size:28px;color:#ececec;transform:scaleX(0.8724);letter-spacing:2.2px">SPRZĘT</div>
<div class="t" id="n5" style="padding:0 12px;left:1993.21px;top:216.10px;font-size:28px;color:#ececec;transform:scaleX(0.9420);letter-spacing:2.2px">PORTFOLIO</div>
<div class="t" id="n6" style="padding:0 12px;left:2213.11px;top:216.10px;font-size:28px;color:#ececec;transform:scaleX(0.9373);letter-spacing:2.2px">OPINIE</div>
<div class="t" id="n7" style="padding:0 12px;left:2362.48px;top:216.10px;font-size:28px;color:#ececec;transform:scaleX(0.9798);letter-spacing:2.2px">KONTAKT</div>
<div class="t" id="n8" style="padding:0 12px;left:2553.60px;top:216.10px;font-size:28px;color:#ececec;transform:scaleX(1.0289);letter-spacing:2.2px">FAQ</div>
<svg class="abs" id="h1" style="left:1280.60px;top:290.22px;overflow:visible;will-change:transform" width="939.7" height="167.2" viewBox="1280.60 290.22 939.7 167.2"><text transform="translate(1300.29 410.40) scale(0.6116 1)" font-family="Liberation Sans, sans-serif" font-size="104.5" font-weight="bold" fill="#ffffff" stroke="#ffffff" stroke-width="7" stroke-linejoin="miter" stroke-miterlimit="2" style="letter-spacing:8px;white-space:pre">CZEŚĆ, JESTEM ŁUKASZ!</text></svg>
<div class="t" id="p1" style="padding:0 12px;left:1285.38px;top:558.49px;font-size:32.5px;color:#dedede;transform:scaleX(1.0708)">Cześć, jestem Łukasz, a na scenie DJ Ready – zawsze gotowy, by Twoja impreza</div>
<div class="t" id="p2" style="padding:0 12px;left:1286.11px;top:612.49px;font-size:32.5px;color:#dedede;transform:scaleX(1.0991)">stała się legendą! Muzyka to moja pasja od najmłodszych lat, zaszczepiona przez</div>
<div class="t" id="p3" style="padding:0 12px;left:1287.32px;top:666.49px;font-size:32.5px;color:#dedede;transform:scaleX(1.0888)">wujka, legendarnego DJ Dragona. Dziś, po latach doświadczeń, łączę rolę DJ-a i</div>
<div class="t" id="p4" style="padding:0 12px;left:1287.17px;top:720.49px;font-size:32.5px;color:#dedede;transform:scaleX(1.1029)">wodzireja, by dostarczać energię, która porywa na parkiet absolutnie wszystkich.</div>
<div class="t" id="p5" style="padding:0 12px;left:1284.98px;top:774.49px;font-size:32.5px;color:#dedede;transform:scaleX(1.1012)">Obserwuję gości, reaguję na atmosferę i dbam o to, by każdy – od kuzynki po</div>
<div class="t" id="p6" style="padding:0 12px;left:1283.83px;top:828.49px;font-size:32.5px;color:#dedede;transform:scaleX(1.1049)">babcię – bawił się wyśmienicie. Twoja radość to dla mnie największy sukces.</div>
<div class="t" id="listen" style="padding:0 12px;left:1284.26px;top:1022.70px;font-size:36.5px;color:#4ca4e4;transform:scaleX(1.0388);font-weight:bold">Posłuchaj, jak witam gości na weselu:</div>
<div class="t" id="t0" style="padding:0 12px;left:1489.27px;top:1120.83px;font-size:23px;color:#a6a6a6;transform:scaleX(1.1189)">0:00</div>
<div class="t" id="t1" style="padding:0 12px;left:2328.86px;top:1120.83px;font-size:23px;color:#a6a6a6;transform:scaleX(1.1371)">0:25</div>
<svg class="abs" id="fh1" style="left:457.70px;top:1502.97px;overflow:visible;will-change:transform" width="438.5" height="72.8" viewBox="457.70 1502.97 438.5 72.8"><text transform="translate(477.39 1555.30) scale(0.6175 1)" font-family="Liberation Sans, sans-serif" font-size="45.5" font-weight="bold" fill="#ffffff" stroke="#ffffff" stroke-width="3" stroke-linejoin="miter" stroke-miterlimit="2" style="letter-spacing:5px;white-space:pre">15 LAT DOŚWIADCZENIA</text></svg>
<svg class="abs" id="fh2" style="left:1239.70px;top:1502.97px;overflow:visible;will-change:transform" width="459.3" height="72.8" viewBox="1239.70 1502.97 459.3 72.8"><text transform="translate(1258.79 1555.30) scale(0.6048 1)" font-family="Liberation Sans, sans-serif" font-size="45.5" font-weight="bold" fill="#ffffff" stroke="#ffffff" stroke-width="3" stroke-linejoin="miter" stroke-miterlimit="2" style="letter-spacing:5px;white-space:pre">ELASTYCZNY REPERTUAR</text></svg>
<svg class="abs" id="fh3" style="left:2034.20px;top:1502.97px;overflow:visible;will-change:transform" width="456.1" height="72.8" viewBox="2034.20 1502.97 456.1 72.8"><text transform="translate(2053.30 1555.30) scale(0.6014 1)" font-family="Liberation Sans, sans-serif" font-size="45.5" font-weight="bold" fill="#ffffff" stroke="#ffffff" stroke-width="3" stroke-linejoin="miter" stroke-miterlimit="2" style="letter-spacing:5px;white-space:pre">PROFESJONALNY SPRZĘT</text></svg>
<div class="t" id="f11" style="padding:0 12px;left:363.00px;top:1600.79px;font-size:32.5px;color:#dcdcdc;transform:scaleX(1.1081)">Setki udanych imprez i zadowolonych</div>
<div class="t" id="f12" style="padding:0 12px;left:345.18px;top:1654.99px;font-size:32.5px;color:#dcdcdc;transform:scaleX(1.1158)">klientów to gwarancja Twojego sukcesu</div>
<div class="t" id="f21" style="padding:0 12px;left:1090.98px;top:1600.79px;font-size:32.5px;color:#dcdcdc;transform:scaleX(1.0937)">Od hitów wszechczasów po nowości. Gram to,</div>
<div class="t" id="f22" style="padding:0 12px;left:1222.73px;top:1654.99px;font-size:32.5px;color:#dcdcdc;transform:scaleX(1.0978)">co kochacie Wy i Wasi goście</div>
<div class="t" id="f31" style="padding:0 12px;left:1927.78px;top:1600.79px;font-size:32.5px;color:#dcdcdc;transform:scaleX(1.0798)">Krystalicznie czysty dźwięk i nowoczesne</div>
<div class="t" id="f32" style="padding:0 12px;left:1928.58px;top:1654.99px;font-size:32.5px;color:#dcdcdc;transform:scaleX(1.1013)">oświetlenie, które tworzy niezapomniany</div>
<div class="t" id="f33" style="padding:0 12px;left:2199.31px;top:1708.99px;font-size:32.5px;color:#dcdcdc;transform:scaleX(1.1565)">klimat</div>
<div class="t" id="consent" style="padding:0 12px;left:2637.30px;top:1778.35px;font-size:21.8px;color:#ffffff;transform:scaleX(1.0998);z-index:30">Zarządzaj zgodą</div>
<div class="t" id="rc" style="padding:0 12px;left:2847.70px;top:1785.96px;font-size:9.5px;color:#555555;transform:scaleX(1.1086);z-index:10">ść - Warunki</div>
</body>
</html>
